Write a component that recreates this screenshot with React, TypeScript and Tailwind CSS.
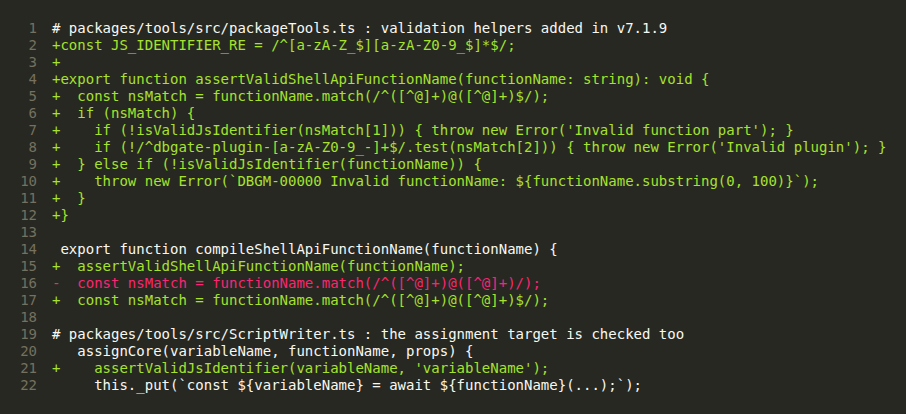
const G = "text-[#a6e22e]";
const R = "text-[#f92672]";
const W = "text-[#f8f8f2]";

const lines: [string, string][] = [
  [W, "# packages/tools/src/packageTools.ts : validation helpers added in v7.1.9"],
  [G, "+const JS_IDENTIFIER_RE = /^[a-zA-Z_$][a-zA-Z0-9_$]*$/;"],
  [G, "+"],
  [G, "+export function assertValidShellApiFunctionName(functionName: string): void {"],
  [G, "+  const nsMatch = functionName.match(/^([^@]+)@([^@]+)$/);"],
  [G, "+  if (nsMatch) {"],
  [G, "+    if (!isValidJsIdentifier(nsMatch[1])) { throw new Error('Invalid function part'); }"],
  [G, "+    if (!/^dbgate-plugin-[a-zA-Z0-9_-]+$/.test(nsMatch[2])) { throw new Error('Invalid plugin'); }"],
  [G, "+  } else if (!isValidJsIdentifier(functionName)) {"],
  [G, "+    throw new Error(`DBGM-00000 Invalid functionName: ${functionName.substring(0, 100)}`);"],
  [G, "+  }"],
  [G, "+}"],
  [W, ""],
  [W, " export function compileShellApiFunctionName(functionName) {"],
  [G, "+  assertValidShellApiFunctionName(functionName);"],
  [R, "-  const nsMatch = functionName.match(/^([^@]+)@([^@]+)/);"],
  [G, "+  const nsMatch = functionName.match(/^([^@]+)@([^@]+)$/);"],
  [W, ""],
  [W, "# packages/tools/src/ScriptWriter.ts : the assignment target is checked too"],
  [W, "   assignCore(variableName, functionName, props) {"],
  [G, "+    assertValidJsIdentifier(variableName, 'variableName');"],
  [W, "     this._put(`const ${variableName} = await ${functionName}(...);`);"],
];

export default function App() {
  return (
    <div className="h-[414px] w-[906px] overflow-hidden bg-[#272822] pt-[20px] font-['DejaVu_Sans_Mono',monospace] text-[14px] leading-[17px]">
      {lines.map(([color, text], i) => (
        <div key={i} className="flex h-[17px] whitespace-pre">
          <span className="w-[37px] shrink-0 text-right text-[#75715e]">{i + 1}</span>
          <span className={`ml-[15px] ${color}`}>{text}</span>
        </div>
      ))}
    </div>
  );
}
